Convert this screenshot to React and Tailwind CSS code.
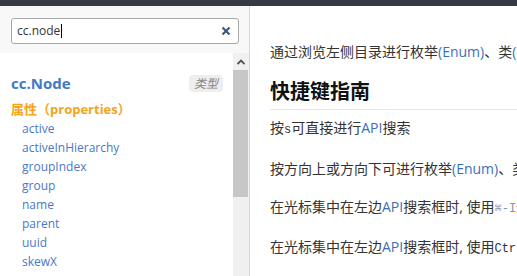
import React from "react";

const props = ["active", "activeInHierarchy", "groupIndex", "group", "name", "parent", "uuid", "skewX"];

function Kbd({ children, className = "" }) {
  return <code className={`font-['Liberation_Mono',monospace] text-[12px] ${className}`}>{children}</code>;
}

export default function App() {
  const cjk = "font-['Open_Sans','Noto_Sans_CJK_SC',sans-serif]";
  return (
    <div className={`w-[517px] h-[276px] overflow-hidden bg-white flex flex-col ${cjk}`}>
      {/* top bar */}
      <div className="h-[6px] bg-[#353b44] shrink-0" />

      <div className="flex flex-1 min-h-0">
        {/* sidebar */}
        <div className="w-[250px] shrink-0 flex flex-col border-r border-[#d9d9d9]">
          <div className="h-[47px] bg-[#f8f8f8] px-[11px] pt-[12px] pr-[10px]">
            <div className="h-[26px] bg-white border border-[#a9a9a9] rounded-[3px] flex items-center pl-[5px] pr-[7px]">
              <span className="text-[12px] text-[#333] leading-none">cc.node</span>
              <span className="w-px h-[14px] bg-black ml-px" />
              <span className="ml-auto text-[#3b5a80]">
                <svg width="10" height="10" viewBox="0 0 10 10">
                  <path d="M1.5 1.5L8.5 8.5M8.5 1.5L1.5 8.5" stroke="currentColor" strokeWidth="2.2" />
                </svg>
              </span>
            </div>
          </div>

          <div className="flex flex-1 min-h-0">
            <div className="flex-1 overflow-hidden pl-[11px] pt-[20px] pr-[10px]">
              <div className="flex items-center justify-between h-[20px]">
                <span className="text-[15px] font-bold text-[#4179c4]">cc.Node</span>
                <span className="h-[17px] px-[5px] rounded-[4px] bg-[#eeeeee] text-[12px] italic text-[#888] leading-[17px]">类型</span>
              </div>
              <div className="mt-[7px] h-[19px] leading-[19px] text-[13px] font-bold text-[#f5a31a]">属性（properties）</div>
              <ul className="pl-[11px]">
                {props.map((p) => (
                  <li key={p} className="h-[19px] leading-[19px] text-[12px] text-[#4a78c6]">
                    {p}
                  </li>
                ))}
              </ul>
            </div>

            {/* scrollbar */}
            <div className="w-[16px] shrink-0 bg-[#f0f0f0] flex flex-col">
              <div className="h-[17px] flex items-center justify-center">
                <svg width="8" height="6" viewBox="0 0 8 6">
                  <path d="M0.5 5L4 1.5L7.5 5" fill="none" stroke="#505050" strokeWidth="1.8" />
                </svg>
              </div>
              <div className="h-[127px] bg-[#c7c7c7] mr-px" />
            </div>
          </div>
        </div>

        {/* content */}
        <div className="flex-1 min-w-0 overflow-hidden pl-[20px] whitespace-nowrap text-[14px] text-[#333]">
          <p className="mt-[36px] leading-[20px]">
            通过浏览左侧目录进行枚举<span className="text-[#3a6fb8]">(Enum)</span>、类<span className="text-[#3a6fb8]">(Class)</span>、模块<span className="text-[#3a6fb8]">(Module)</span>的查看
          </p>
          <h2 className="mt-[16px] text-[20px] font-bold text-[#111] leading-[28px] pb-[3px] border-b border-[#e6e6e6]">快捷键指南</h2>
          <p className="mt-[8px] leading-[20px]">
            按<Kbd className="text-[11px]">s</Kbd>可直接进行<span className="text-[#3a6fb8]">API</span>搜索
          </p>
          <p className="mt-[19px] leading-[20px]">
            按方向上或方向下可进行枚举<span className="text-[#3a6fb8]">(Enum)</span>、类<span className="text-[#3a6fb8]">(Class)</span>的选择
          </p>
          <p className="mt-[18px] leading-[20px]">
            在光标集中在左边<span className="text-[#3a6fb8]">API</span>搜索框时, 使用<Kbd className="text-[#8a93a8]">⌘-I</Kbd>进行切换
          </p>
          <p className="mt-[18px] leading-[20px]">
            在光标集中在左边<span className="text-[#3a6fb8]">API</span>搜索框时, 使用<Kbd>Ctrl-I</Kbd>进行切换
          </p>
        </div>
      </div>
    </div>
  );
}
